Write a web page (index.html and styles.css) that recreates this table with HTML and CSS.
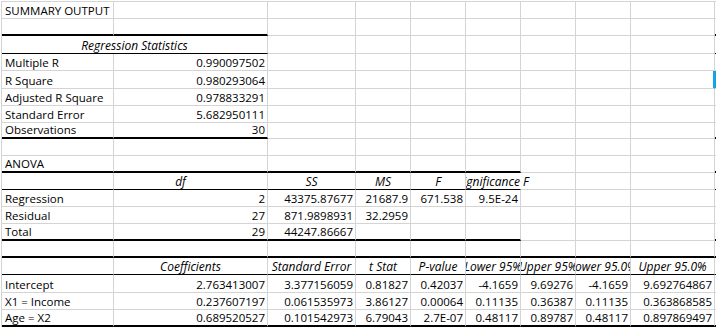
FILE: index.html
```
<!DOCTYPE html>
<html lang="en">
<head>
<meta charset="utf-8">
<title>Summary Output</title>
<link rel="stylesheet" href="styles.css">
</head>
<body>
<div class="sheet">
  <div class="row">
    <div class="c">SUMMARY OUTPUT</div><div class="c"></div><div class="c"></div><div class="c"></div><div class="c"></div><div class="c"></div><div class="c"></div><div class="c"></div><div class="c"></div><div class="c j"></div>
  </div>
  <div class="row">
    <div class="c tk"></div><div class="c tk"></div><div class="c"></div><div class="c"></div><div class="c"></div><div class="c"></div><div class="c"></div><div class="c"></div><div class="c"></div><div class="c j tk"></div>
  </div>
  <div class="row h18">
    <div class="c h sp2 tn">Regression Statistics</div><div class="c"></div><div class="c"></div><div class="c"></div><div class="c"></div><div class="c"></div><div class="c"></div><div class="c"></div><div class="c j tn"></div>
  </div>
  <div class="row">
    <div class="c">Multiple R</div><div class="c r">0.990097502</div><div class="c"></div><div class="c"></div><div class="c"></div><div class="c"></div><div class="c"></div><div class="c"></div><div class="c"></div><div class="c j"></div>
  </div>
  <div class="row h18">
    <div class="c">R Square</div><div class="c r">0.980293064</div><div class="c"></div><div class="c"></div><div class="c"></div><div class="c"></div><div class="c"></div><div class="c"></div><div class="c sel"></div><div class="c j selj"></div>
  </div>
  <div class="row">
    <div class="c">Adjusted R Square</div><div class="c r">0.978833291</div><div class="c"></div><div class="c"></div><div class="c"></div><div class="c"></div><div class="c"></div><div class="c"></div><div class="c"></div><div class="c j"></div>
  </div>
  <div class="row">
    <div class="c">Standard Error</div><div class="c r">5.682950111</div><div class="c"></div><div class="c"></div><div class="c"></div><div class="c"></div><div class="c"></div><div class="c"></div><div class="c"></div><div class="c j"></div>
  </div>
  <div class="row h16">
    <div class="c tk">Observations</div><div class="c r tk">30</div><div class="c"></div><div class="c"></div><div class="c"></div><div class="c"></div><div class="c"></div><div class="c"></div><div class="c"></div><div class="c j tk"></div>
  </div>
  <div class="row">
    <div class="c"></div><div class="c"></div><div class="c"></div><div class="c"></div><div class="c"></div><div class="c"></div><div class="c"></div><div class="c"></div><div class="c"></div><div class="c j"></div>
  </div>
  <div class="row">
    <div class="c tk">ANOVA</div><div class="c tk"></div><div class="c tk"></div><div class="c tk"></div><div class="c tk"></div><div class="c tk"></div><div class="c"></div><div class="c"></div><div class="c"></div><div class="c j tk"></div>
  </div>
  <div class="row">
    <div class="c tn"></div><div class="c h tn df">df</div><div class="c h tn">SS</div><div class="c h tn">MS</div><div class="c h tn">F</div><div class="c h tn spill">Significance F</div><div class="c"></div><div class="c"></div><div class="c"></div><div class="c j tn"></div>
  </div>
  <div class="row">
    <div class="c">Regression</div><div class="c r">2</div><div class="c r">43375.87677</div><div class="c r">21687.9</div><div class="c r">671.538</div><div class="c r">9.5E-24</div><div class="c"></div><div class="c"></div><div class="c"></div><div class="c j"></div>
  </div>
  <div class="row">
    <div class="c">Residual</div><div class="c r">27</div><div class="c r">871.9898931</div><div class="c r">32.2959</div><div class="c"></div><div class="c"></div><div class="c"></div><div class="c"></div><div class="c"></div><div class="c j"></div>
  </div>
  <div class="row">
    <div class="c tk">Total</div><div class="c r tk">29</div><div class="c r tk">44247.86667</div><div class="c tk"></div><div class="c tk"></div><div class="c tk"></div><div class="c"></div><div class="c"></div><div class="c"></div><div class="c j tk"></div>
  </div>
  <div class="row">
    <div class="c tk"></div><div class="c tk"></div><div class="c tk"></div><div class="c tk"></div><div class="c tk"></div><div class="c tk"></div><div class="c tk"></div><div class="c tk"></div><div class="c tk"></div><div class="c j tk"></div>
  </div>
  <div class="row">
    <div class="c tn"></div><div class="c h tn">Coefficients</div><div class="c h tn">Standard Error</div><div class="c h tn">t Stat</div><div class="c h tn">P-value</div><div class="c h tn clip">Lower 95%</div><div class="c h tn clip">Upper 95%</div><div class="c h tn clip">Lower 95.0%</div><div class="c h tn">Upper 95.0%</div><div class="c j tn"></div>
  </div>
  <div class="row h18">
    <div class="c">Intercept</div><div class="c r">2.763413007</div><div class="c r">3.377156059</div><div class="c r">0.81827</div><div class="c r">0.42037</div><div class="c r">-4.1659</div><div class="c r">9.69276</div><div class="c r">-4.1659</div><div class="c r">9.692764867</div><div class="c j"></div>
  </div>
  <div class="row">
    <div class="c">X1 = Income</div><div class="c r">0.237607197</div><div class="c r">0.061535973</div><div class="c r">3.86127</div><div class="c r">0.00064</div><div class="c r">0.11135</div><div class="c r">0.36387</div><div class="c r">0.11135</div><div class="c r">0.363868585</div><div class="c j"></div>
  </div>
  <div class="row">
    <div class="c tk">Age = X2</div><div class="c r tk">0.689520527</div><div class="c r tk">0.101542973</div><div class="c r tk">6.79043</div><div class="c r tk">2.7E-07</div><div class="c r tk">0.48117</div><div class="c r tk">0.89787</div><div class="c r tk">0.48117</div><div class="c r tk">0.897869497</div><div class="c j tk"></div>
  </div>
</div>
</body>
</html>
```
FILE: styles.css
```
html, body {
  margin: 0;
  padding: 0;
  background: #ffffff;
}

body {
  width: 716px;
  height: 327px;
  overflow: hidden;
  font-family: "Open Sans", Lato, sans-serif;
  font-size: 11.5px;
  font-weight: 500;
  color: #000000;
}

.sheet {
  margin: 1px 0 0 1px;
  border-top: 1px solid #d4d4d4;
  border-left: 1px solid #d4d4d4;
}

.row {
  display: grid;
  grid-template-columns: 112px 154px 88px 55px 55px 55px 55px 55px 84px 1fr;
  height: 17px;
}

.row.h18 { height: 18px; }
.row.h16 { height: 16px; }

.c {
  box-sizing: border-box;
  display: flex;
  align-items: flex-end;
  min-width: 0;
  padding: 0 2px 0 3px;
  line-height: 14px;
  white-space: nowrap;
  border-right: 1px solid #d4d4d4;
  border-bottom: 1px solid #d4d4d4;
}

.c.r {
  justify-content: flex-end;
}

.c.h {
  justify-content: center;
  font-style: italic;
  font-size: 12px;
  padding: 0;
}

.c.sp2 {
  grid-column: span 2;
}

.c.df {
  padding-right: 20px;
}

.c.spill {
  border-right-color: transparent;
  clip-path: inset(0 -60px 0 0);
  position: relative;
  z-index: 1;
}

.c.clip {
  overflow: hidden;
}

.c.tk {
  border-bottom: 2px solid #000000;
}

.c.tn {
  border-bottom: 1px solid #000000;
}

.c.j {
  border-right: 0;
  padding: 0;
}

.c.sel {
  border-right-color: #10a4e8;
  box-shadow: inset -1px 0 0 #10a4e8;
}

.c.selj {
  background: #10a4e8;
}
```
